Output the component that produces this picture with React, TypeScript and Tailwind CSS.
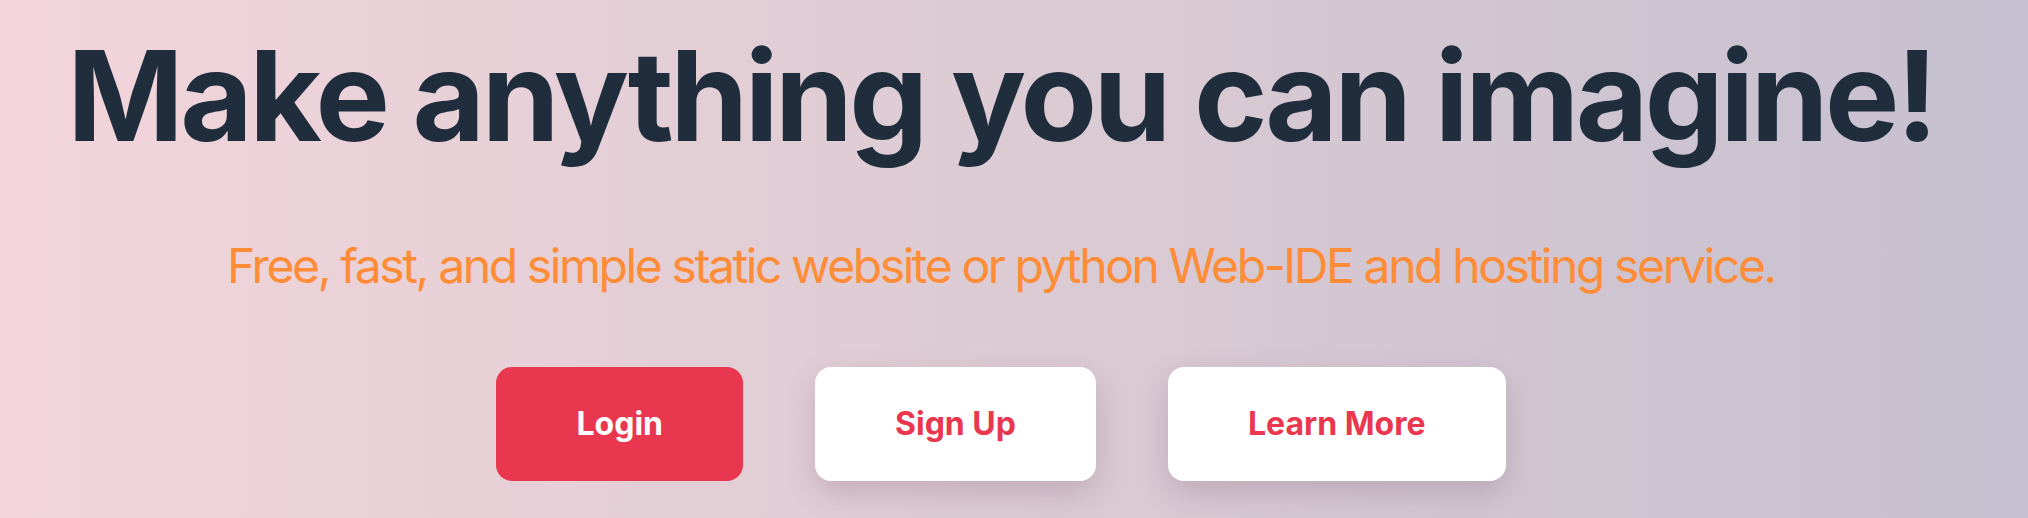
import React from "react";

export default function App() {
  return (
    <div
      className="w-full h-[518px] overflow-hidden bg-gradient-to-r from-[#f3d5db] via-[#dccbd3] to-[#c6c0d0] pr-[26px]"
      style={{ fontFamily: "Inter, 'Noto Sans', sans-serif" }}
    >
      <div className="flex flex-col items-center pt-[33px]">
        <h1 className="text-[125px] leading-none font-bold text-[#1f2d3d] tracking-[-0.028em] whitespace-nowrap">
          Make anything you can imagine!
        </h1>
        <p className="mt-[84px] text-[48px] leading-none text-[#ff8c37] tracking-[-0.05em] whitespace-nowrap">
          Free, fast, and simple static website or python Web-IDE and hosting service.
        </p>
        <div className="mt-[77px] flex gap-[72px]">
          <button className="px-20 py-8 leading-[50px] text-[32px] font-bold rounded-2xl bg-[#ea3750] text-white">
            Login
          </button>
          <button className="px-20 py-8 leading-[50px] text-[32px] font-bold rounded-2xl bg-white text-[#ea3750] shadow-[0_12px_30px_rgba(80,40,70,0.18)]">
            Sign Up
          </button>
          <button className="px-20 py-8 leading-[50px] text-[32px] font-bold rounded-2xl bg-white text-[#ea3750] shadow-[0_12px_30px_rgba(80,40,70,0.18)]">
            Learn More
          </button>
        </div>
      </div>
    </div>
  );
}
